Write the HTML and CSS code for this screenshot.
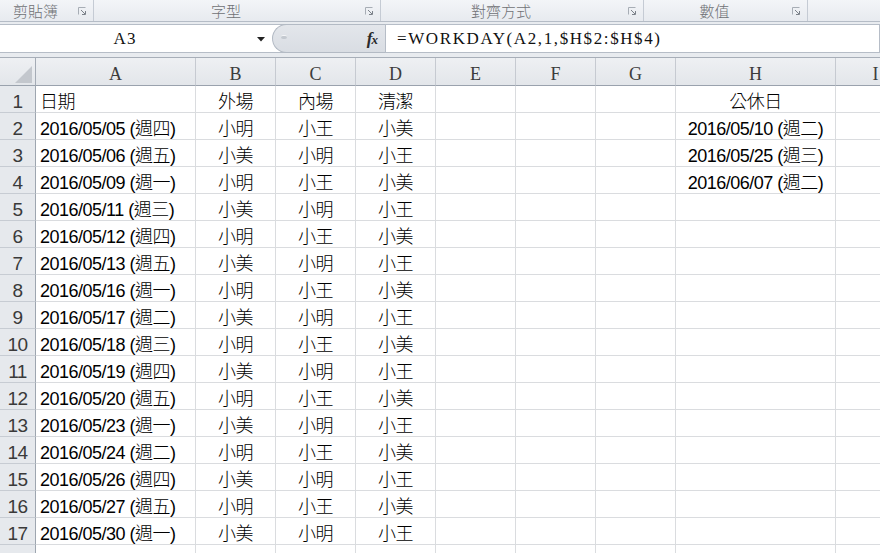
FILE: index.html
```html
<!DOCTYPE html>
<html>
<head>
<meta charset="utf-8">
<link rel="stylesheet" href="styles.css">
</head>
<body>
<div class="ribbon">
  <div class="grp"><span class="glabel">剪貼簿</span><span class="launch"><svg width="8" height="8" viewBox="0 0 8 8"><path d="M0.5 7.5V0.5H7.5" stroke="#a7adb5" fill="none"/><path d="M3 3L7 7M7.5 4V7.5H4" stroke="#7c828a" fill="none"/></svg></span></div>
  <div class="grp"><span class="glabel">字型</span><span class="launch"><svg width="8" height="8" viewBox="0 0 8 8"><path d="M0.5 7.5V0.5H7.5" stroke="#a7adb5" fill="none"/><path d="M3 3L7 7M7.5 4V7.5H4" stroke="#7c828a" fill="none"/></svg></span></div>
  <div class="grp"><span class="glabel">對齊方式</span><span class="launch"><svg width="8" height="8" viewBox="0 0 8 8"><path d="M0.5 7.5V0.5H7.5" stroke="#a7adb5" fill="none"/><path d="M3 3L7 7M7.5 4V7.5H4" stroke="#7c828a" fill="none"/></svg></span></div>
  <div class="grp"><span class="glabel">數值</span><span class="launch"><svg width="8" height="8" viewBox="0 0 8 8"><path d="M0.5 7.5V0.5H7.5" stroke="#a7adb5" fill="none"/><path d="M3 3L7 7M7.5 4V7.5H4" stroke="#7c828a" fill="none"/></svg></span></div>
  <div class="grp last"></div>
</div>

<div class="fbar">
  <div class="fleft">
    <div class="namebox">
      <span class="nametext">A3</span>
      <span class="ddarrow"><svg width="8" height="5" viewBox="0 0 8 5"><path d="M0 0H8L4 4.5Z" fill="#222"/></svg></span>
    </div>
    <div class="pill">
      <span class="handle"></span>
      <span class="fx">f<span class="fxx">x</span></span>
    </div>
  </div>
  <div class="formula">=WORKDAY(A2,1,$H$2:$H$4)</div>
</div>

<div class="sheet">
  <div class="row hrow">
    <div class="corner"><svg class="tri" width="17" height="17" viewBox="0 0 17 17"><path d="M17 0V17H0Z" fill="#c3c7cd"/></svg></div>
    <div class="ch">A</div><div class="ch">B</div><div class="ch">C</div><div class="ch">D</div><div class="ch">E</div><div class="ch">F</div><div class="ch">G</div><div class="ch">H</div><div class="ch">I</div>
  </div>
  <div class="row"><div class="rh">1</div><div class="cell">日期</div><div class="cell c">外場</div><div class="cell c">內場</div><div class="cell c">清潔</div><div class="cell"></div><div class="cell"></div><div class="cell"></div><div class="cell c">公休日</div><div class="cell"></div></div>
  <div class="row"><div class="rh">2</div><div class="cell">2016/05/05 (週四)</div><div class="cell c">小明</div><div class="cell c">小王</div><div class="cell c">小美</div><div class="cell"></div><div class="cell"></div><div class="cell"></div><div class="cell c">2016/05/10 (週二)</div><div class="cell"></div></div>
  <div class="row"><div class="rh">3</div><div class="cell">2016/05/06 (週五)</div><div class="cell c">小美</div><div class="cell c">小明</div><div class="cell c">小王</div><div class="cell"></div><div class="cell"></div><div class="cell"></div><div class="cell c">2016/05/25 (週三)</div><div class="cell"></div></div>
  <div class="row"><div class="rh">4</div><div class="cell">2016/05/09 (週一)</div><div class="cell c">小明</div><div class="cell c">小王</div><div class="cell c">小美</div><div class="cell"></div><div class="cell"></div><div class="cell"></div><div class="cell c">2016/06/07 (週二)</div><div class="cell"></div></div>
  <div class="row"><div class="rh">5</div><div class="cell">2016/05/11 (週三)</div><div class="cell c">小美</div><div class="cell c">小明</div><div class="cell c">小王</div><div class="cell"></div><div class="cell"></div><div class="cell"></div><div class="cell"></div><div class="cell"></div></div>
  <div class="row"><div class="rh">6</div><div class="cell">2016/05/12 (週四)</div><div class="cell c">小明</div><div class="cell c">小王</div><div class="cell c">小美</div><div class="cell"></div><div class="cell"></div><div class="cell"></div><div class="cell"></div><div class="cell"></div></div>
  <div class="row"><div class="rh">7</div><div class="cell">2016/05/13 (週五)</div><div class="cell c">小美</div><div class="cell c">小明</div><div class="cell c">小王</div><div class="cell"></div><div class="cell"></div><div class="cell"></div><div class="cell"></div><div class="cell"></div></div>
  <div class="row"><div class="rh">8</div><div class="cell">2016/05/16 (週一)</div><div class="cell c">小明</div><div class="cell c">小王</div><div class="cell c">小美</div><div class="cell"></div><div class="cell"></div><div class="cell"></div><div class="cell"></div><div class="cell"></div></div>
  <div class="row"><div class="rh">9</div><div class="cell">2016/05/17 (週二)</div><div class="cell c">小美</div><div class="cell c">小明</div><div class="cell c">小王</div><div class="cell"></div><div class="cell"></div><div class="cell"></div><div class="cell"></div><div class="cell"></div></div>
  <div class="row"><div class="rh">10</div><div class="cell">2016/05/18 (週三)</div><div class="cell c">小明</div><div class="cell c">小王</div><div class="cell c">小美</div><div class="cell"></div><div class="cell"></div><div class="cell"></div><div class="cell"></div><div class="cell"></div></div>
  <div class="row"><div class="rh">11</div><div class="cell">2016/05/19 (週四)</div><div class="cell c">小美</div><div class="cell c">小明</div><div class="cell c">小王</div><div class="cell"></div><div class="cell"></div><div class="cell"></div><div class="cell"></div><div class="cell"></div></div>
  <div class="row"><div class="rh">12</div><div class="cell">2016/05/20 (週五)</div><div class="cell c">小明</div><div class="cell c">小王</div><div class="cell c">小美</div><div class="cell"></div><div class="cell"></div><div class="cell"></div><div class="cell"></div><div class="cell"></div></div>
  <div class="row"><div class="rh">13</div><div class="cell">2016/05/23 (週一)</div><div class="cell c">小美</div><div class="cell c">小明</div><div class="cell c">小王</div><div class="cell"></div><div class="cell"></div><div class="cell"></div><div class="cell"></div><div class="cell"></div></div>
  <div class="row"><div class="rh">14</div><div class="cell">2016/05/24 (週二)</div><div class="cell c">小明</div><div class="cell c">小王</div><div class="cell c">小美</div><div class="cell"></div><div class="cell"></div><div class="cell"></div><div class="cell"></div><div class="cell"></div></div>
  <div class="row"><div class="rh">15</div><div class="cell">2016/05/26 (週四)</div><div class="cell c">小美</div><div class="cell c">小明</div><div class="cell c">小王</div><div class="cell"></div><div class="cell"></div><div class="cell"></div><div class="cell"></div><div class="cell"></div></div>
  <div class="row"><div class="rh">16</div><div class="cell">2016/05/27 (週五)</div><div class="cell c">小明</div><div class="cell c">小王</div><div class="cell c">小美</div><div class="cell"></div><div class="cell"></div><div class="cell"></div><div class="cell"></div><div class="cell"></div></div>
  <div class="row"><div class="rh">17</div><div class="cell">2016/05/30 (週一)</div><div class="cell c">小美</div><div class="cell c">小明</div><div class="cell c">小王</div><div class="cell"></div><div class="cell"></div><div class="cell"></div><div class="cell"></div><div class="cell"></div></div>
  <div class="row"><div class="rh">18</div><div class="cell"></div><div class="cell"></div><div class="cell"></div><div class="cell"></div><div class="cell"></div><div class="cell"></div><div class="cell"></div><div class="cell"></div><div class="cell"></div></div>
</div>
</body>
</html>
```

FILE: styles.css
```css
* { box-sizing: border-box; }
html, body { margin: 0; padding: 0; }
body {
  width: 880px;
  height: 553px;
  overflow: hidden;
  background: #ffffff;
}

/* ribbon group labels */
.ribbon {
  display: grid;
  grid-template-columns: 94px 287px 263px 164px 1fr;
  height: 22px;
  border-bottom: 1px solid #b5bcc6;
  background: linear-gradient(#f3f5f8, #e7eaef);
}
.grp {
  display: flex;
  align-items: center;
  border-right: 1px solid #c5cbd4;
}
.grp.last { border-right: none; }
.glabel {
  flex: 1;
  text-align: center;
  font-family: "Noto Sans CJK TC", sans-serif;
  font-weight: 300;
  font-size: 15px;
  line-height: 20px;
  color: #6f7175;
}
.launch {
  width: 22px;
  height: 20px;
  display: flex;
  align-items: center;
  padding-left: 7px;
  padding-top: 1px;
}
.launch svg { display: block; }

/* formula bar */
.fbar {
  display: flex;
  height: 36px;
  padding-top: 2px;
  border-bottom: 1px solid #a7aeb8;
  background: #e8ebef;
}
.fleft {
  display: flex;
  height: 29px;
  background: #ffffff;
  border-top: 1px solid #b6bdc7;
  border-bottom: 1px solid #b6bdc7;
}
.namebox {
  width: 272px;
  display: flex;
  align-items: center;
}
.nametext {
  width: 250px;
  text-align: center;
  font-family: "Liberation Serif", serif;
  font-size: 17px;
  letter-spacing: 1px;
  color: #111;
  padding-top: 1px;
}
.ddarrow {
  display: flex;
  padding-left: 7px;
  padding-top: 2px;
}
.ddarrow svg { display: block; }
.pill {
  width: 113px;
  margin-top: -1px;
  margin-bottom: -1px;
  background: linear-gradient(#e3e6eb, #d9dde3);
  border: 1px solid #b3bac4;
  border-right: none;
  border-radius: 15px 0 0 15px;
  display: flex;
  align-items: center;
  justify-content: space-between;
  padding: 0 8px 0 8px;
}
.handle {
  width: 6px;
  height: 4px;
  border-radius: 3px;
  background: #c4c9d0;
  border-top: 1px solid #f4f5f7;
  margin-top: -3px;
}
.fx {
  font-family: "Liberation Serif", serif;
  font-style: italic;
  font-weight: bold;
  font-size: 17px;
  color: #2a2a2a;
  letter-spacing: -1px;
}
.fxx { font-size: 13px; }
.formula {
  flex: 1;
  height: 29px;
  background: #ffffff;
  border: 1px solid #b6bdc7;
  padding-left: 11px;
  font-family: "Liberation Serif", serif;
  font-size: 17px;
  line-height: 27px;
  letter-spacing: 1.6px;
  color: #111;
  white-space: nowrap;
}

/* sheet grid */
.sheet { width: 916px; }
.row {
  display: grid;
  grid-template-columns: 36px 160px repeat(6, 80px) 160px 80px;
  height: 27px;
}
.hrow { height: 28px; }
.corner {
  position: relative;
  background: linear-gradient(#eef0f3, #e3e6ea);
  border-right: 1px solid #a4abb5;
  border-bottom: 1px solid #9aa2ad;
}
.tri {
  position: absolute;
  right: 3px;
  bottom: 2px;
}
.ch {
  display: flex;
  align-items: flex-end;
  justify-content: center;
  padding-bottom: 1px;
  background: linear-gradient(#eef0f3, #e3e6ea);
  border-right: 1px solid #c6cad1;
  border-bottom: 1px solid #9aa2ad;
  font-family: "Liberation Serif", serif;
  font-size: 18px;
  line-height: 20px;
  color: #3c3c3c;
}
.rh {
  display: flex;
  align-items: flex-end;
  justify-content: center;
  background: #e6e9ed;
  border-right: 1px solid #9ea6b0;
  border-bottom: 1px solid #c7ccd3;
  font-family: "Liberation Sans", sans-serif;
  font-size: 19px;
  line-height: 20px;
  letter-spacing: -0.5px;
  color: #3a3a3a;
}
.cell {
  display: flex;
  align-items: flex-end;
  justify-content: flex-start;
  padding: 0 4px;
  border-right: 1px solid #dadcdf;
  border-bottom: 1px solid #dadcdf;
  font-family: "Liberation Sans", "Noto Sans CJK TC", sans-serif;
  font-weight: 300;
  font-size: 18px;
  line-height: 20px;
  letter-spacing: -0.5px;
  color: #000;
  white-space: nowrap;
}
.cell.c { justify-content: center; }
```
